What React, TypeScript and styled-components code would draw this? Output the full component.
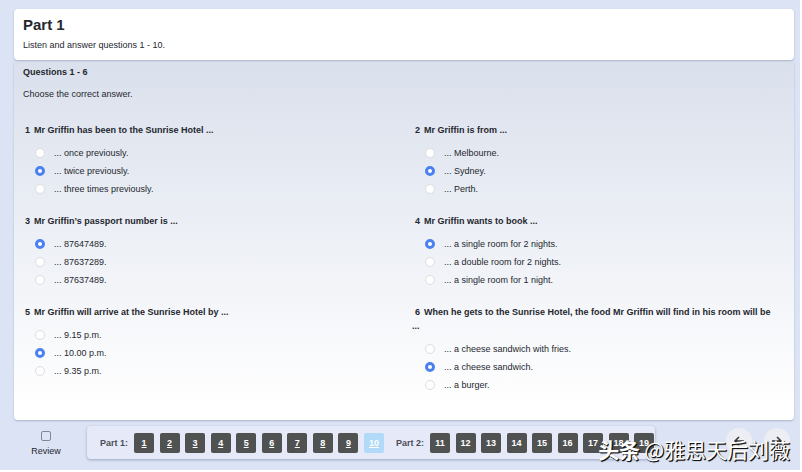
import React, { useState } from "react";
import styled, { createGlobalStyle } from "styled-components";

const GlobalStyle = createGlobalStyle`
  *, *::before, *::after { box-sizing: border-box; }
  body { margin: 0; background: #fff; }
  button, input { font: inherit; margin: 0; }
`;

const Page = styled.div`
  position: relative;
  margin: 0 2px 2px 0;
  min-height: calc(100vh - 2px);
  padding: 9px 6px 0 14px;
  display: flex;
  flex-direction: column;
  background: #dbe3f5;
  color: #25272f;
  font-family: "Liberation Sans", Arial, sans-serif;
  font-size: 9px;
  line-height: 14px;
`;

const Intro = styled.header`
  position: relative;
  padding: 6px 9px 8px;
  border-radius: 4px;
  background: #fff;
  box-shadow: 0 1px 2px #aab3c8;
`;

const Title = styled.h1`
  margin: 0 0 4px;
  font-size: 15px;
  line-height: 19px;
`;

const Text = styled.p`
  margin: 0;
`;

const Sheet = styled.main`
  flex: 1;
  padding: 5px 0 16px;
  border-radius: 4px;
  background: linear-gradient(#dae0ec, #fff 96%);
  box-shadow: 0 1px 2px #aab3c8;
`;

const SheetHead = styled.div`
  padding: 0 9px;
`;

const Heading = styled.h2`
  margin: 0 0 8px;
  font-size: 9px;
  line-height: 14px;
`;

const Questions = styled.div`
  display: grid;
  grid-template-columns: 1fr 1fr;
  row-gap: 16px;
  margin-top: 22px;
`;

const QuestionBox = styled.fieldset`
  min-width: 0;
  margin: 0;
  padding: 0 16px 0 8px;
  border: 0;
`;

const Legend = styled.legend`
  padding: 0 0 7px;
  font-weight: bold;
`;

const Num = styled.span`
  padding: 0 4px 0 3px;
`;

const Option = styled.label`
  display: flex;
  align-items: center;
  gap: 9px;
  height: 18px;
  padding-left: 13px;
`;

const Radio = styled.input`
  appearance: none;
  width: 10px;
  height: 10px;
  border: 1px solid #dcdddf;
  border-radius: 50%;
  background: #fff;
  &:checked {
    border: 3px solid #4a80f0;
  }
`;

const Footer = styled.footer`
  display: flex;
  align-items: flex-start;
  padding: 6px 0 11px;
`;

const Review = styled.label`
  display: flex;
  flex-direction: column;
  align-items: center;
  gap: 3px;
  width: 64px;
  margin-right: 9px;
  padding-top: 5px;
`;

const Check = styled.input`
  appearance: none;
  width: 10px;
  height: 10px;
  border: 1px solid #85888f;
  border-radius: 2px;
`;

const Pager = styled.nav`
  display: flex;
  align-items: center;
  height: 33px;
  padding: 0 1px 0 13px;
  border-radius: 4px;
  background: #e6eaf8;
  box-shadow: 0 1px 3px #9aa4bd;
`;

const PartLabel = styled.span`
  margin-right: 6px;
  color: #4a4d58;
  font-weight: bold;
`;

const Numbers = styled.div<{ $width: number }>`
  display: flex;
  justify-content: space-between;
  width: ${(p) => p.$width}px;
  & + ${PartLabel} { margin-left: 12px; }
`;

const NumberButton = styled.button<{ $answered?: boolean; $current?: boolean }>`
  width: 20px;
  height: 20px;
  padding: 0;
  border: 0;
  border-radius: 2px;
  background: ${(p) => (p.$current ? "#b1daf8" : "#505252")};
  color: #fff;
  font-weight: bold;
  text-decoration: ${(p) => (p.$answered ? "underline" : "none")};
`;

const Steps = styled.div`
  display: flex;
  gap: 12px;
  margin: 2px 4px 0 auto;
`;

const StepButton = styled.button`
  display: grid;
  place-items: center;
  width: 26px;
  height: 26px;
  padding: 0;
  border: 0;
  border-radius: 50%;
  background: #eceef3;
  color: #333;
`;

const Watermark = styled.div`
  position: absolute;
  right: 10px;
  bottom: 7px;
  display: flex;
  gap: 4px;
  color: #fff;
  font-family: "Noto Sans CJK SC", sans-serif;
  font-size: 21px;
  line-height: 28px;
  text-shadow: 1px 1px 0 #111, 1px 1px 1px #111;
  white-space: nowrap;
  pointer-events: none;
`;

type Item = { id: number; title: string; options: string[]; answer: number };

const items: Item[] = [
  { id: 1, title: "Mr Griffin has been to the Sunrise Hotel ...", options: ["once previously.", "twice previously.", "three times previously."], answer: 1 },
  { id: 2, title: "Mr Griffin is from ...", options: ["Melbourne.", "Sydney.", "Perth."], answer: 1 },
  { id: 3, title: "Mr Griffin’s passport number is ...", options: ["87647489.", "87637289.", "87637489."], answer: 0 },
  { id: 4, title: "Mr Griffin wants to book ...", options: ["a single room for 2 nights.", "a double room for 2 nights.", "a single room for 1 night."], answer: 0 },
  { id: 5, title: "Mr Griffin will arrive at the Sunrise Hotel by ...", options: ["9.15 p.m.", "10.00 p.m.", "9.35 p.m."], answer: 1 },
  { id: 6, title: "When he gets to the Sunrise Hotel, the food Mr Griffin will find in his room will be ...", options: ["a cheese sandwich with fries.", "a cheese sandwich.", "a burger."], answer: 1 },
];

function Question({ item }: { item: Item }) {
  const [picked, setPicked] = useState(item.answer);
  return (
    <QuestionBox>
      <Legend><Num>{item.id}</Num>{item.title}</Legend>
      {item.options.map((option, i) => (
        <Option key={option}>
          <Radio type="radio" name={`q${item.id}`} checked={picked === i} onChange={() => setPicked(i)} />
          ... {option}
        </Option>
      ))}
    </QuestionBox>
  );
}

function Arrow({ back }: { back?: boolean }) {
  return (
    <svg width="12" height="12" viewBox="0 0 12 12" fill="none" stroke="currentColor" strokeWidth="1.5" aria-hidden="true">
      <path d={back ? "M11 6H2M6 2L2 6l4 4" : "M1 6h9M6 2l4 4-4 4"} />
    </svg>
  );
}

const partOne = Array.from({ length: 10 }, (_, i) => i + 1);
const partTwo = Array.from({ length: 9 }, (_, i) => i + 11);

export default function App() {
  return (
    <>
      <GlobalStyle />
      <Page>
        <Intro>
          <Title>Part 1</Title>
          <Text>Listen and answer questions 1 - 10.</Text>
        </Intro>
        <Sheet>
          <SheetHead>
            <Heading>Questions 1 - 6</Heading>
            <Text>Choose the correct answer.</Text>
          </SheetHead>
          <Questions>
            {items.map((item) => <Question key={item.id} item={item} />)}
          </Questions>
        </Sheet>
        <Footer>
          <Review><Check type="checkbox" />Review</Review>
          <Pager>
            <PartLabel>Part 1:</PartLabel>
            <Numbers $width={250}>
              {partOne.map((n) => <NumberButton key={n} $answered $current={n === 10}>{n}</NumberButton>)}
            </Numbers>
            <PartLabel>Part 2:</PartLabel>
            <Numbers $width={224}>
              {partTwo.map((n) => <NumberButton key={n}>{n}</NumberButton>)}
            </Numbers>
          </Pager>
          <Steps>
            <StepButton aria-label="Previous"><Arrow back /></StepButton>
            <StepButton aria-label="Next"><Arrow /></StepButton>
          </Steps>
        </Footer>
        <Watermark><b>头条</b><span>@雅思天后刘薇</span></Watermark>
      </Page>
    </>
  );
}
